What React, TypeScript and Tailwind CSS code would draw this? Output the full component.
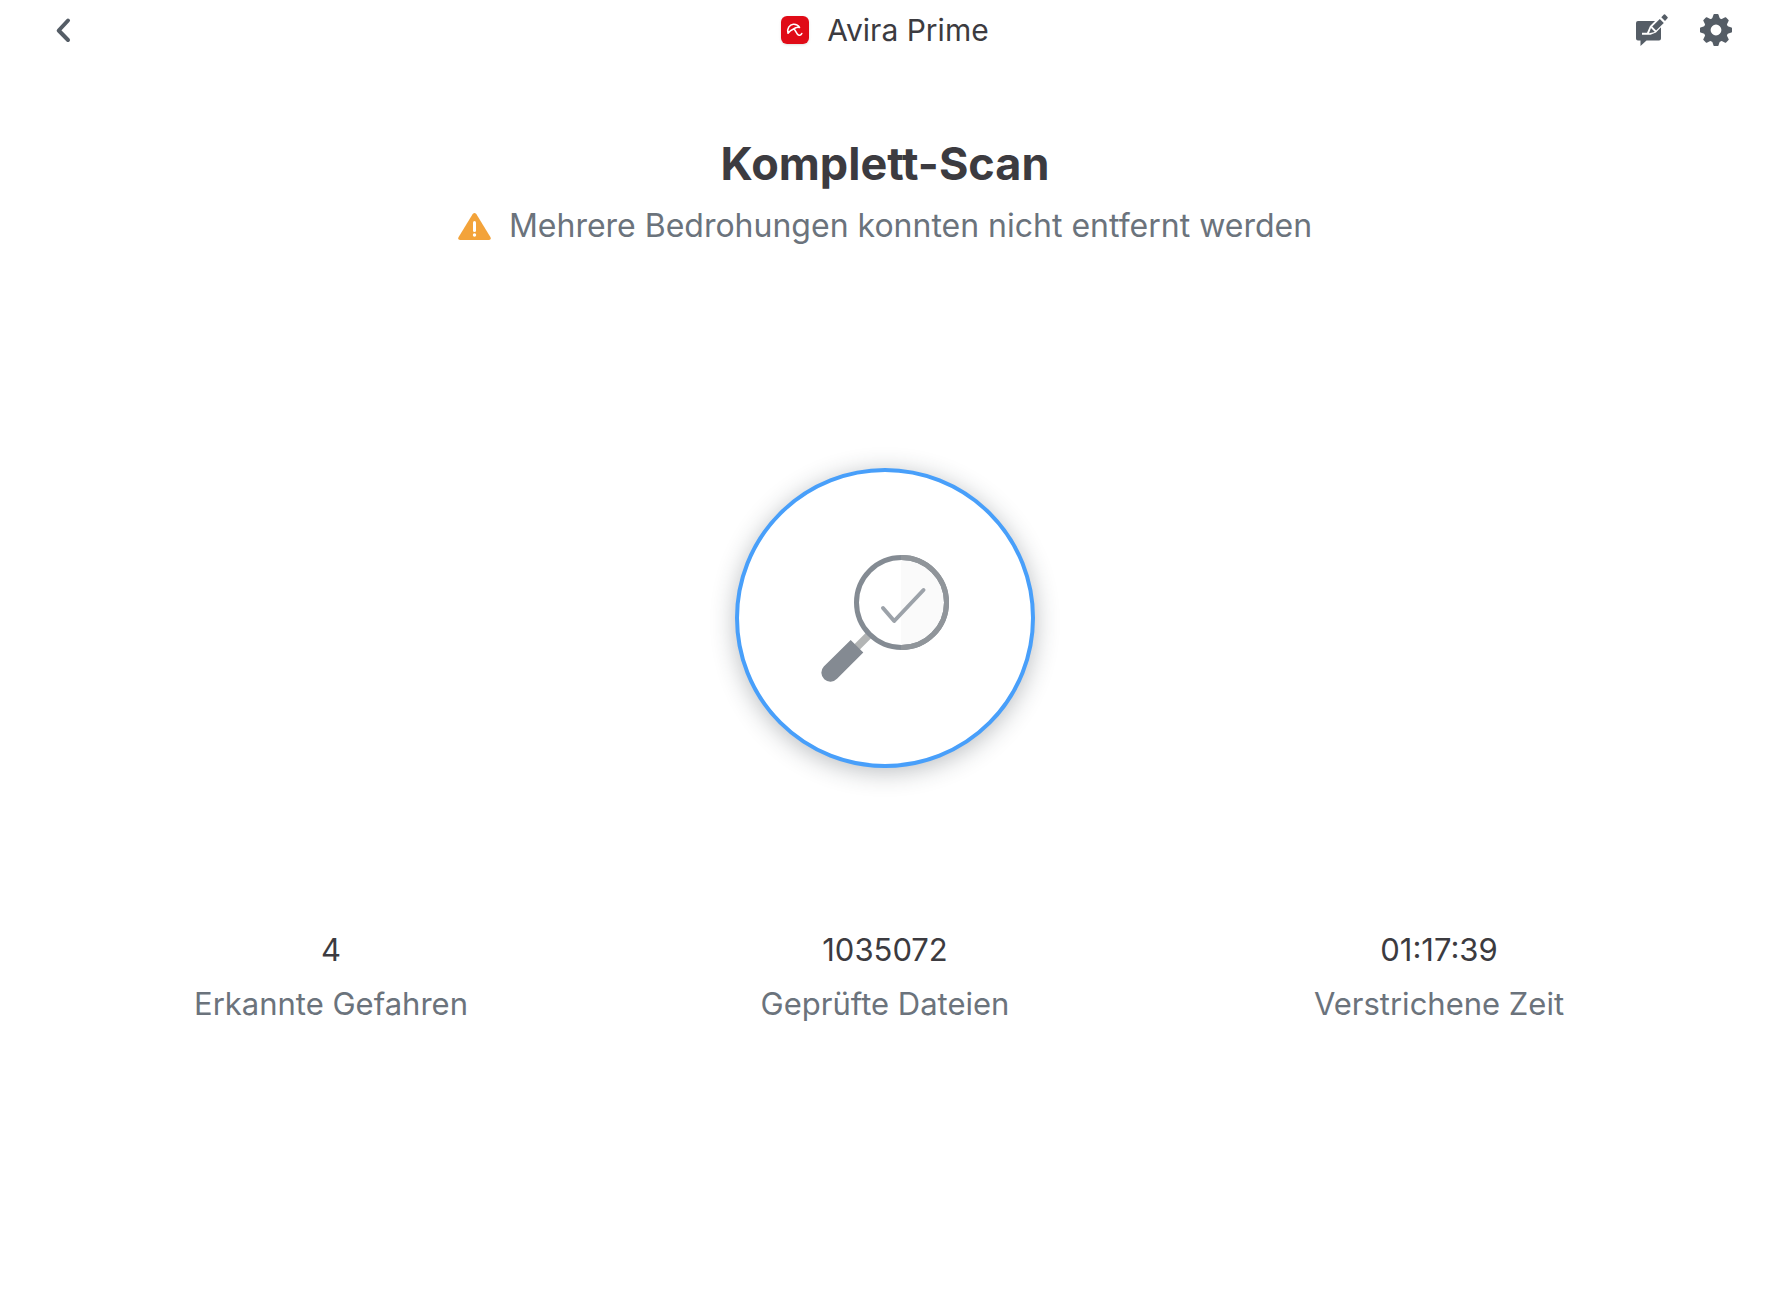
import React from "react";

const stats = [
  { value: "4", label: "Erkannte Gefahren" },
  { value: "1035072", label: "Geprüfte Dateien" },
  { value: "01:17:39", label: "Verstrichene Zeit" },
];

const teeth = [0, 45, 90, 135, 180, 225, 270, 315];

function BackIcon() {
  return (
    <svg width="24" height="32" viewBox="0 0 24 32" fill="none" aria-hidden="true">
      <path d="M16 6.500 6.700 16.500l9.300 9.500" stroke="#555d66" strokeWidth="4" strokeLinecap="round" strokeLinejoin="round" />
    </svg>
  );
}

function AviraLogo() {
  return (
    <svg className="rounded-md shadow-sm" width="28" height="28" viewBox="0 0 28 28" fill="none" aria-hidden="true">
      <rect width="28" height="28" fill="#e00b17" />
      <path
        d="M7 17.200C5.600 12.500 8.600 8.600 12.300 8.300c2.700-.2 5 1 6.200 3.200-2-.5-4.200.1-6 1.500C10.300 14 8.200 15.500 7 17.200ZM13 12.700l3.500 5.600c1.300 1.700 3.500 1.100 4.300-.8"
        stroke="#fff"
        strokeWidth="1.600"
        strokeLinecap="round"
        strokeLinejoin="round"
      />
    </svg>
  );
}

function FeedbackIcon() {
  return (
    <svg width="32" height="32" viewBox="0 0 32 32" aria-hidden="true">
      <path d="M2 7h21a2 2 0 0 1 2 2v15.500a2 2 0 0 1-2 2H10.500L4.500 32V26.500H2a2 2 0 0 1-2-2V9a2 2 0 0 1 2-2Z" fill="#555d66" />
      <path d="M6 18.700h5L14 12 25 1l6 6L20 18.500l-5.500 2.200H6Z" fill="#fff" />
      <path d="m16.200 12.600 7.600-7.600 4 4-7.700 7.600ZM25.300 3.200 27.900.6q.6-.6 1.200 0l2.400 2.400q.6.6 0 1.200L29 6.900ZM15 14.100l3.900 3.800-5.900 1.300Z" fill="#555d66" />
    </svg>
  );
}

function GearIcon() {
  return (
    <svg width="32" height="32" viewBox="-16 -16 32 32" fill="#555d66" stroke="#555d66" aria-hidden="true">
      <circle r="8.800" fill="none" strokeWidth="6.800" />
      {teeth.map((angle) => (
        <path key={angle} d="M-1.700-15.200H1.700L3.500-10H-3.500Z" strokeWidth="1.600" strokeLinejoin="round" transform={`rotate(${angle})`} />
      ))}
    </svg>
  );
}

function WarningIcon() {
  return (
    <svg width="33" height="27" viewBox="0 0 33 27" aria-hidden="true">
      <path d="M14.700 1.100q1.800-2.200 3.600 0L32.500 24.300Q33.500 27 31 27H2Q-.5 27 .5 24.300Z" fill="#f3a33a" />
      <path d="M16.500 9.500v8" stroke="#fff" strokeWidth="3" strokeLinecap="round" />
      <circle cx="16.500" cy="22" r="1.700" fill="#fff" />
    </svg>
  );
}

function MagnifierIcon() {
  return (
    <svg width="128" height="128" viewBox="0 0 128 128" fill="none" aria-hidden="true">
      <path d="M50 79 36 93" stroke="#b3b5b5" strokeWidth="7.500" />
      <path d="M29.700 86 42.300 98.500 16 124.800A9 9 0 0 1 2.800 112.500Z" fill="#848a92" />
      <path d="M80 3.500h.5a45 45 0 0 1 0 90H80Z" fill="#fafafa" />
      <circle cx="80.500" cy="48.500" r="45" stroke="#848b93" strokeWidth="5" />
      <path d="M80 3.500h.5a45 45 0 0 1 0 90H80" stroke="#90959a" strokeWidth="5" />
      <path d="M62 54 73.200 67 102.500 36" stroke="#9ca2a9" strokeWidth="4" strokeLinecap="round" strokeLinejoin="round" />
    </svg>
  );
}

export default function App() {
  return (
    <div className="min-h-screen bg-white font-['Inter',sans-serif] text-[#3c3b40]">
      <header className="grid h-[60px] grid-cols-[1fr_auto_1fr] items-center pr-[34px] pl-[38px]">
        <button type="button" aria-label="Zurück" className="w-12 pl-[14px]">
          <BackIcon />
        </button>
        <div className="flex items-center gap-[18px]">
          <AviraLogo />
          <span className="text-[30px] leading-10">Avira Prime</span>
        </div>
        <div className="flex items-center justify-end gap-8">
          <button type="button" aria-label="Feedback">
            <FeedbackIcon />
          </button>
          <button type="button" aria-label="Einstellungen">
            <GearIcon />
          </button>
        </div>
      </header>

      <main className="flex flex-col items-center pr-[50px] pl-[54px]">
        <h1 className="mt-[74px] text-[45px] leading-[60px] font-bold">Komplett-Scan</h1>
        <p className="mt-3 flex items-center gap-[18px] text-[32px] leading-10 text-[#6b737c]">
          <WarningIcon />
          Mehrere Bedrohungen konnten nicht entfernt werden
        </p>

        <div className="mt-[222px] flex size-[300px] items-center justify-center rounded-full border-4 border-[#489ffa] bg-white shadow-[0_4px_24px_rgba(40,50,60,0.32)]">
          <MagnifierIcon />
        </div>

        <dl className="mt-[162px] grid w-full grid-cols-3 text-center text-[31px] leading-10">
          {stats.map((stat) => (
            <div key={stat.label} className="flex flex-col-reverse gap-[14px]">
              <dt className="text-[#6b737c]">{stat.label}</dt>
              <dd>{stat.value}</dd>
            </div>
          ))}
        </dl>
      </main>
    </div>
  );
}
